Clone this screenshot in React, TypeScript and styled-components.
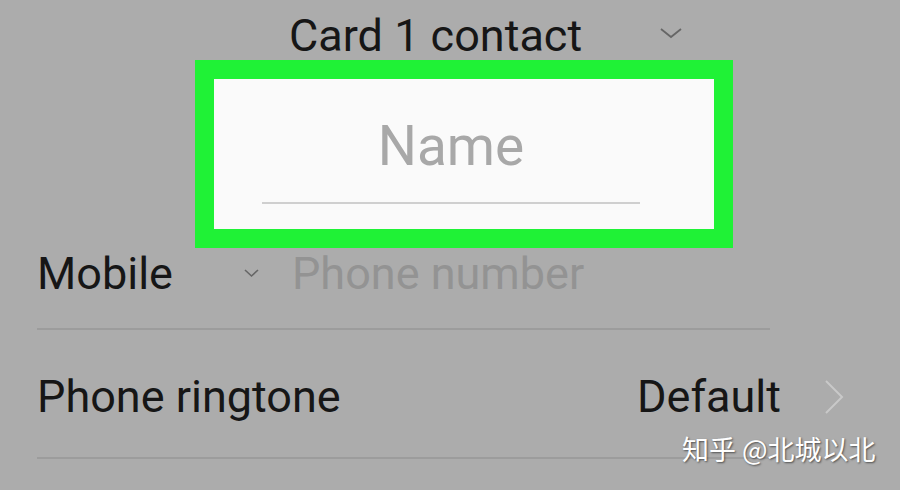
import React from "react";
import styled, { createGlobalStyle } from "styled-components";

const Global = createGlobalStyle`
  html, body { margin: 0; padding: 0; }
  body { background: #acacac; font-family: Roboto, "Noto Sans", "Liberation Sans", sans-serif; }
`;

const Page = styled.div`
  position: relative;
  width: 900px;
  height: 490px;
  overflow: hidden;
  background: #acacac;
  color: #161616;
`;

const Header = styled.div`
  display: flex;
  align-items: center;
  height: 60px;
  padding-left: 289px;
  box-sizing: border-box;
`;

const Title = styled.div`
  font-size: 45px;
  line-height: 1;
  margin-top: 11px;
`;

const Chevron = styled.svg<{ $ml: number }>`
  margin-left: ${(p) => p.$ml}px;
  flex: none;
`;

const HighlightBox = styled.div`
  margin-left: 195px;
  width: 538px;
  height: 188px;
  box-sizing: border-box;
  border: 19px solid #1ff236;
  background: #fafafa;
  display: flex;
  flex-direction: column;
  align-items: center;
  padding-right: 26px;
`;

const NamePlaceholder = styled.div`
  font-size: 55px;
  line-height: 1;
  color: #a8a8a8;
  margin-top: 40px;
`;

const Underline = styled.div`
  width: 378px;
  height: 2px;
  background: #cfcfcf;
  margin-top: 28px;
`;

const Row = styled.div<{ $h: number; $pt?: number; $pb?: number }>`
  display: flex;
  align-items: center;
  height: ${(p) => p.$h}px;
  padding: ${(p) => p.$pt ?? 0}px 55px ${(p) => p.$pb ?? 0}px 37px;
  box-sizing: border-box;
`;

const Label = styled.div`
  font-size: 45px;
  line-height: 1;
`;

const Placeholder = styled.div`
  font-size: 45px;
  line-height: 1;
  color: #939393;
  margin-left: 32px;
`;

const Value = styled.div`
  font-size: 45px;
  line-height: 1;
  margin-left: auto;
`;

const Divider = styled.div`
  margin-left: 37px;
  width: 733px;
  height: 2px;
  background: #9c9c9c;
`;

const Watermark = styled.div`
  position: absolute;
  left: 682px;
  top: 433px;
  font-family: "Noto Sans CJK SC", "Noto Sans", sans-serif;
  font-size: 27px;
  line-height: 1.2;
  color: #ffffff;
  text-shadow: 1px 1px 2px rgba(0, 0, 0, 0.55);
  white-space: nowrap;
`;

export default function App() {
  return (
    <>
      <Global />
      <Page>
        <Header>
          <Title>Card 1 contact</Title>
          <Chevron $ml={77} width="24" height="14" viewBox="0 0 24 14" style={{ marginTop: 6 }}>
            <polyline points="2,3 12,11 22,3" fill="none" stroke="#666" strokeWidth="1.8" />
          </Chevron>
        </Header>
        <HighlightBox>
          <NamePlaceholder>Name</NamePlaceholder>
          <Underline />
        </HighlightBox>
        <Row $h={80} $pb={30}>
          <Label>Mobile</Label>
          <Chevron $ml={70} width="17" height="12" viewBox="0 0 17 12">
            <polyline points="2,3 8.5,9 15,3" fill="none" stroke="#666" strokeWidth="1.6" />
          </Chevron>
          <Placeholder>Phone number</Placeholder>
        </Row>
        <Divider />
        <Row $h={127} $pt={6}>
          <Label>Phone ringtone</Label>
          <Value>Default</Value>
          <Chevron $ml={42} width="22" height="36" viewBox="0 0 22 36">
            <polyline points="3,2 19,18 3,34" fill="none" stroke="#c9c9c9" strokeWidth="2" />
          </Chevron>
        </Row>
        <Divider />
        <Watermark>知乎 @北城以北</Watermark>
      </Page>
    </>
  );
}
